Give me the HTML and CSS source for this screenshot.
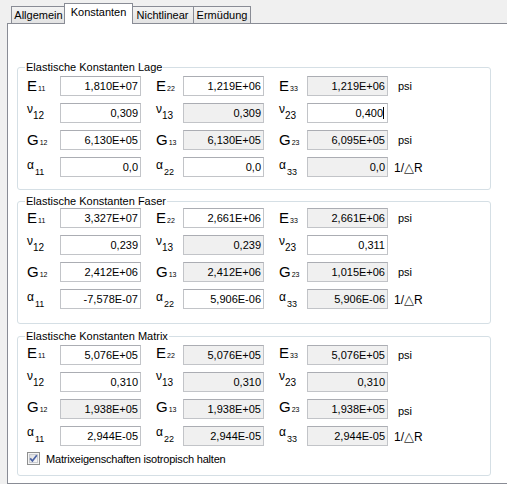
FILE: index.html
```html
<!DOCTYPE html>
<html>
<head>
<meta charset="utf-8">
<link rel="stylesheet" href="styles.css">
</head>
<body>
<div class="window">
  <div class="tabs">
    <div class="tab t-allg">Allgemein</div>
    <div class="tab sel t-konst">Konstanten</div>
    <div class="tab t-nicht">Nichtlinear</div>
    <div class="tab t-erm">Ermüdung</div>
  </div>
  <div class="panel">
    <fieldset class="group g-lage">
      <legend>Elastische Konstanten Lage</legend>
      <div class="rows">
        <div class="row">
          <span class="lbl c1 lat"><span class="s">E</span><span class="i">11</span></span><span class="inp">1,810E+07</span>
          <span class="lbl c2 lat"><span class="s">E</span><span class="i">22</span></span><span class="inp">1,219E+06</span>
          <span class="lbl c3 lat"><span class="s">E</span><span class="i">33</span></span><span class="inp ro">1,219E+06</span>
          <span class="unit">psi</span>
        </div>
        <div class="row">
          <span class="lbl c1 nu"><span class="s">ν</span><span class="i">12</span></span><span class="inp">0,309</span>
          <span class="lbl c2 nu"><span class="s">ν</span><span class="i">13</span></span><span class="inp ro">0,309</span>
          <span class="lbl c3 nu"><span class="s">ν</span><span class="i">23</span></span><span class="inp"><span class="caret">0,400</span></span>
        </div>
        <div class="row">
          <span class="lbl c1 lat"><span class="s">G</span><span class="i">12</span></span><span class="inp">6,130E+05</span>
          <span class="lbl c2 lat"><span class="s">G</span><span class="i">13</span></span><span class="inp ro">6,130E+05</span>
          <span class="lbl c3 lat"><span class="s">G</span><span class="i">23</span></span><span class="inp ro">6,095E+05</span>
          <span class="unit">psi</span>
        </div>
        <div class="row">
          <span class="lbl c1 al"><span class="s">α</span><span class="i">11</span></span><span class="inp">0,0</span>
          <span class="lbl c2 al"><span class="s">α</span><span class="i">22</span></span><span class="inp">0,0</span>
          <span class="lbl c3 al"><span class="s">α</span><span class="i">33</span></span><span class="inp ro">0,0</span>
          <span class="unit u-t">1/<span class="tri">△</span>R</span>
        </div>
      </div>
    </fieldset>

    <fieldset class="group g-faser">
      <legend>Elastische Konstanten Faser</legend>
      <div class="rows">
        <div class="row">
          <span class="lbl c1 lat"><span class="s">E</span><span class="i">11</span></span><span class="inp">3,327E+07</span>
          <span class="lbl c2 lat"><span class="s">E</span><span class="i">22</span></span><span class="inp">2,661E+06</span>
          <span class="lbl c3 lat"><span class="s">E</span><span class="i">33</span></span><span class="inp ro">2,661E+06</span>
          <span class="unit">psi</span>
        </div>
        <div class="row">
          <span class="lbl c1 nu"><span class="s">ν</span><span class="i">12</span></span><span class="inp">0,239</span>
          <span class="lbl c2 nu"><span class="s">ν</span><span class="i">13</span></span><span class="inp ro">0,239</span>
          <span class="lbl c3 nu"><span class="s">ν</span><span class="i">23</span></span><span class="inp">0,311</span>
        </div>
        <div class="row">
          <span class="lbl c1 lat"><span class="s">G</span><span class="i">12</span></span><span class="inp">2,412E+06</span>
          <span class="lbl c2 lat"><span class="s">G</span><span class="i">13</span></span><span class="inp ro">2,412E+06</span>
          <span class="lbl c3 lat"><span class="s">G</span><span class="i">23</span></span><span class="inp ro">1,015E+06</span>
          <span class="unit">psi</span>
        </div>
        <div class="row">
          <span class="lbl c1 al"><span class="s">α</span><span class="i">11</span></span><span class="inp">-7,578E-07</span>
          <span class="lbl c2 al"><span class="s">α</span><span class="i">22</span></span><span class="inp">5,906E-06</span>
          <span class="lbl c3 al"><span class="s">α</span><span class="i">33</span></span><span class="inp ro">5,906E-06</span>
          <span class="unit u-t">1/<span class="tri">△</span>R</span>
        </div>
      </div>
    </fieldset>

    <fieldset class="group g-matrix">
      <legend>Elastische Konstanten Matrix</legend>
      <div class="rows">
        <div class="row">
          <span class="lbl c1 lat"><span class="s">E</span><span class="i">11</span></span><span class="inp">5,076E+05</span>
          <span class="lbl c2 lat"><span class="s">E</span><span class="i">22</span></span><span class="inp ro">5,076E+05</span>
          <span class="lbl c3 lat"><span class="s">E</span><span class="i">33</span></span><span class="inp ro">5,076E+05</span>
          <span class="unit">psi</span>
        </div>
        <div class="row">
          <span class="lbl c1 nu"><span class="s">ν</span><span class="i">12</span></span><span class="inp">0,310</span>
          <span class="lbl c2 nu"><span class="s">ν</span><span class="i">13</span></span><span class="inp ro">0,310</span>
          <span class="lbl c3 nu"><span class="s">ν</span><span class="i">23</span></span><span class="inp ro">0,310</span>
        </div>
        <div class="row">
          <span class="lbl c1 lat"><span class="s">G</span><span class="i">12</span></span><span class="inp ro">1,938E+05</span>
          <span class="lbl c2 lat"><span class="s">G</span><span class="i">13</span></span><span class="inp ro">1,938E+05</span>
          <span class="lbl c3 lat"><span class="s">G</span><span class="i">23</span></span><span class="inp ro">1,938E+05</span>
          <span class="unit u-low">psi</span>
        </div>
        <div class="row">
          <span class="lbl c1 al"><span class="s">α</span><span class="i">11</span></span><span class="inp">2,944E-05</span>
          <span class="lbl c2 al"><span class="s">α</span><span class="i">22</span></span><span class="inp ro">2,944E-05</span>
          <span class="lbl c3 al"><span class="s">α</span><span class="i">33</span></span><span class="inp ro">2,944E-05</span>
          <span class="unit u-t">1/<span class="tri">△</span>R</span>
        </div>
        <div class="check">
          <svg class="cb" width="13" height="13" viewBox="0 0 13 13">
            <defs>
              <linearGradient id="cbg" x1="0" y1="0" x2="1" y2="1">
                <stop offset="0" stop-color="#dcdcdc"/>
                <stop offset="1" stop-color="#fbfbfb"/>
              </linearGradient>
            </defs>
            <rect x="0.5" y="0.5" width="12" height="12" fill="#f4f4f4" stroke="#8e8f8f"/>
            <rect x="2.5" y="2.5" width="8" height="8" fill="url(#cbg)" stroke="#c9cbd0"/>
            <path d="M3.2 6.4 L5.4 8.9 L9.8 3.2" fill="none" stroke="#4a62a4" stroke-width="1.7"/>
          </svg>
          <span class="chk-text">Matrixeigenschaften isotropisch halten</span>
        </div>
      </div>
    </fieldset>
  </div>
</div>
</body>
</html>
```
FILE: styles.css
```css
html, body {
  margin: 0;
  padding: 0;
  overflow: hidden;
}
body {
  width: 507px;
  height: 484px;
  background: #f0f0f0;
  font-family: "Liberation Sans", Arial, sans-serif;
  font-size: 11px;
  color: #000;
}

/* ---------- tabs ---------- */
.tabs {
  display: flex;
  align-items: flex-end;
  height: 21px;
  padding: 3px 0 0 11px;
  margin-bottom: -1px;
  position: relative;
  z-index: 1;
}
.tab {
  box-sizing: border-box;
  height: 18px;
  border: 1px solid #898c95;
  background: linear-gradient(#f3f3f3, #e3e3e3);
  text-align: center;
  line-height: 17px;
  white-space: nowrap;
}
.tab.sel {
  height: 21px;
  background: #fff;
  border-bottom: none;
  margin: 0 -2px;
  line-height: 17px;
  position: relative;
  z-index: 2;
}
.t-allg { width: 55px; }
.t-konst { width: 69px; }
.t-nicht { width: 63px; }
.t-erm { width: 58px; margin-left: -1px; }

/* ---------- panel ---------- */
.panel {
  box-sizing: border-box;
  width: 500px;
  height: 461px;
  margin-left: 7px;
  border: 1px solid #898c95;
  border-right: none;
  background: #fff;
  padding-top: 37px;
}

/* ---------- group boxes ---------- */
.group {
  box-sizing: border-box;
  width: 474px;
  margin: 0 0 0 9px;
  min-width: 0;
  border: 1px solid #d5dfe5;
  border-radius: 3px;
  padding: 2px 0 12px 0;
}
.group legend {
  margin-left: 7px;
  padding: 0 1px;
  font-size: 11px;
  line-height: 13px;
}
.g-faser { margin-top: 5px; padding-top: 0; padding-bottom: 14px; }
.g-matrix { margin-top: 6px; padding-bottom: 10px; }

.rows {
  display: flex;
  flex-direction: column;
  gap: 7px;
  margin-left: 9px;
}
.row {
  display: flex;
  align-items: center;
  height: 20px;
}

/* ---------- labels ---------- */
.lbl {
  box-sizing: border-box;
  flex: none;
  display: flex;
  align-items: flex-start;
  height: 20px;
  white-space: nowrap;
}
.lbl .s, .lbl .i { display: block; }
.c1 { width: 33px; }
.c2 { width: 27px; margin-left: 15px; }
.c3 { width: 28px; margin-left: 15px; }

.lat .s { font-size: 15px; line-height: 15px; margin-top: 2px; }
.lat .i { font-size: 7px; line-height: 7px; margin-top: 9px; margin-left: 1px; }

.nu .s { font-size: 12px; line-height: 12px; margin-top: 0; }
.nu .i { font-size: 10px; line-height: 10px; margin-top: 8px; }

.al .s { font-size: 12px; line-height: 12px; margin-top: 2px; }
.al .i { font-size: 9px; line-height: 9px; margin-top: 11px; margin-left: 1px; }

.g-matrix .lbl { margin-top: -4px; }

/* ---------- inputs ---------- */
.inp {
  box-sizing: border-box;
  flex: none;
  width: 81px;
  height: 20px;
  border: 1px solid #c2c4c8;
  border-top-color: #abadb3;
  background: #fff;
  text-align: right;
  padding-right: 2px;
  font-size: 11px;
  line-height: 18px;
  white-space: nowrap;
}
.inp.ro { background: #f0f0f0; }
.caret {
  border-right: 1px solid #000;
  margin-right: 1px;
}

/* ---------- units ---------- */
.unit {
  margin-left: 10px;
  font-size: 11px;
}
.u-low { margin-top: 4px; }
.u-t {
  margin-left: 6px;
  font-size: 12px;
}
.tri {
  font-family: "DejaVu Sans", sans-serif;
  font-size: 13px;
  color: #333;
}

/* ---------- checkbox ---------- */
.check {
  display: flex;
  align-items: center;
  height: 13px;
  margin-top: -1px;
}
.cb { flex: none; }
.chk-text { margin-left: 6px; font-size: 11px; letter-spacing: -0.2px; }
```
